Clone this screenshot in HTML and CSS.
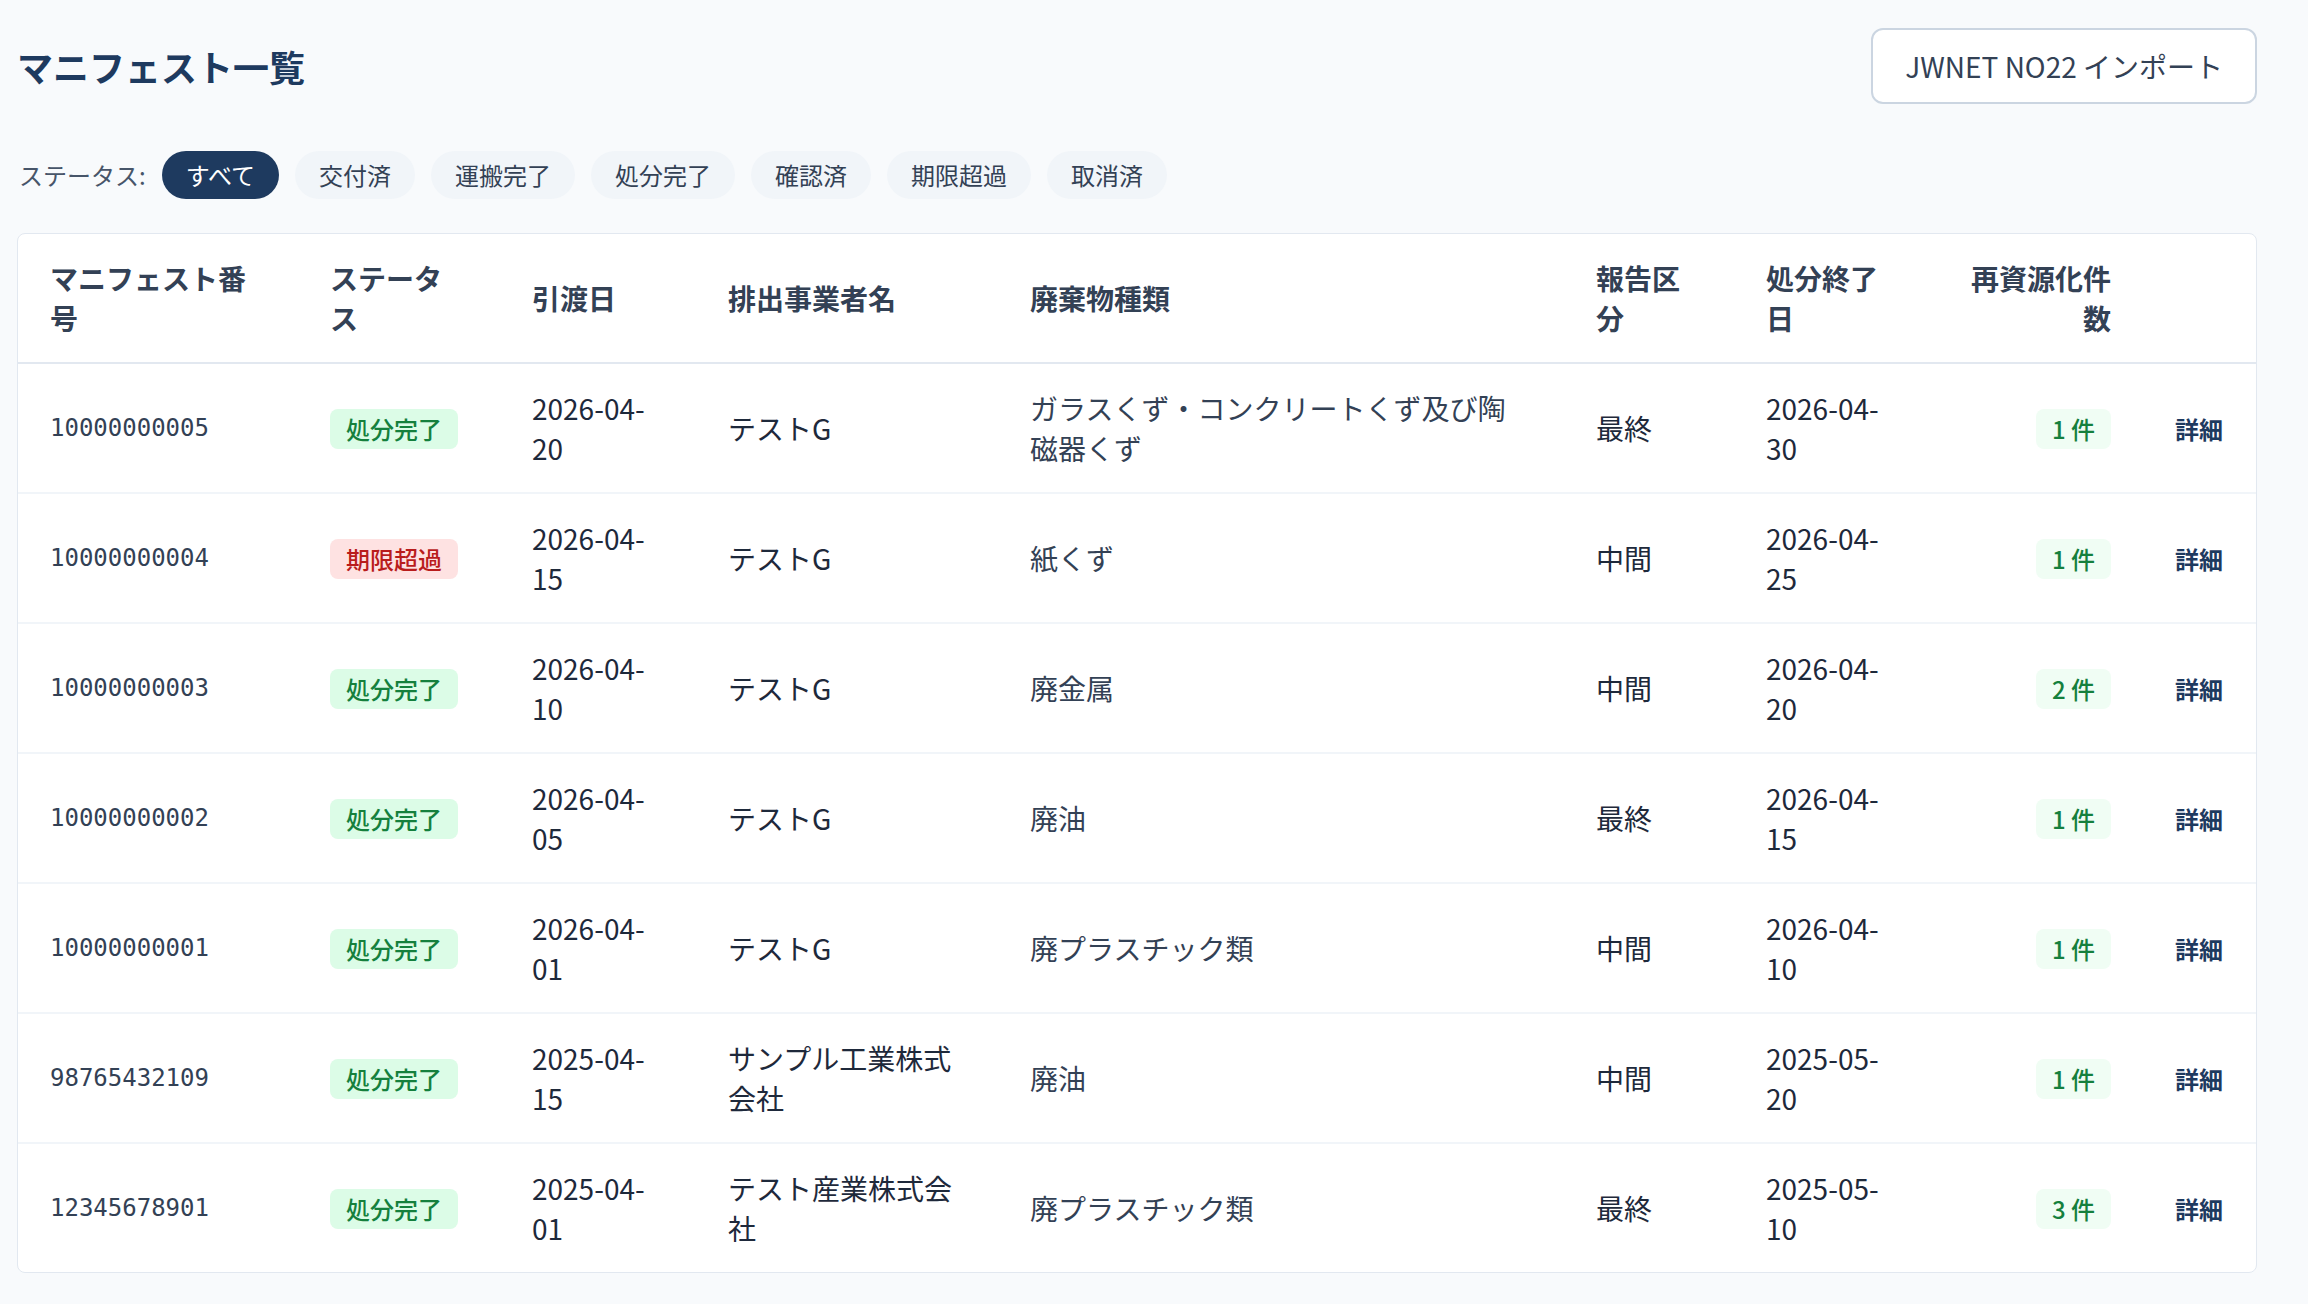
FILE: index.html
```html
<!DOCTYPE html>
<html lang="ja">
<head>
    <meta charset="UTF-8">
    <title>マニフェスト一覧</title>
    <link rel="stylesheet" href="styles.css">
</head>
<body>
    <main class="page">
        <header class="page-header">
            <h1 class="page-title">マニフェスト一覧</h1>
            <button class="import-button">JWNET NO22 インポート</button>
        </header>

        <div class="status-filter">
            <span class="filter-label">ステータス:</span>
            <button class="pill active">すべて</button>
            <button class="pill">交付済</button>
            <button class="pill">運搬完了</button>
            <button class="pill">処分完了</button>
            <button class="pill">確認済</button>
            <button class="pill">期限超過</button>
            <button class="pill">取消済</button>
        </div>

        <div class="table-wrap">
            <table class="manifest-table">
                <colgroup>
                    <col class="c-no">
                    <col class="c-status">
                    <col class="c-date">
                    <col class="c-company">
                    <col class="c-waste">
                    <col class="c-report">
                    <col class="c-end">
                    <col class="c-count">
                    <col class="c-link">
                </colgroup>
                <thead>
                    <tr>
                        <th>マニフェスト番号</th>
                        <th>ステータス</th>
                        <th>引渡日</th>
                        <th>排出事業者名</th>
                        <th>廃棄物種類</th>
                        <th>報告区分</th>
                        <th>処分終了日</th>
                        <th class="num">再資源化件数</th>
                        <th></th>
                    </tr>
                </thead>
                <tbody>
                    <tr>
                        <td class="mono">10000000005</td>
                        <td><span class="badge done">処分完了</span></td>
                        <td>2026-04-20</td>
                        <td>テストG</td>
                        <td class="waste">ガラスくず・コンクリートくず及び陶磁器くず</td>
                        <td>最終</td>
                        <td>2026-04-30</td>
                        <td class="num"><span class="badge count">1 件</span></td>
                        <td><a class="detail-link" href="#">詳細</a></td>
                    </tr>
                    <tr>
                        <td class="mono">10000000004</td>
                        <td><span class="badge overdue">期限超過</span></td>
                        <td>2026-04-15</td>
                        <td>テストG</td>
                        <td class="waste">紙くず</td>
                        <td>中間</td>
                        <td>2026-04-25</td>
                        <td class="num"><span class="badge count">1 件</span></td>
                        <td><a class="detail-link" href="#">詳細</a></td>
                    </tr>
                    <tr>
                        <td class="mono">10000000003</td>
                        <td><span class="badge done">処分完了</span></td>
                        <td>2026-04-10</td>
                        <td>テストG</td>
                        <td class="waste">廃金属</td>
                        <td>中間</td>
                        <td>2026-04-20</td>
                        <td class="num"><span class="badge count">2 件</span></td>
                        <td><a class="detail-link" href="#">詳細</a></td>
                    </tr>
                    <tr>
                        <td class="mono">10000000002</td>
                        <td><span class="badge done">処分完了</span></td>
                        <td>2026-04-05</td>
                        <td>テストG</td>
                        <td class="waste">廃油</td>
                        <td>最終</td>
                        <td>2026-04-15</td>
                        <td class="num"><span class="badge count">1 件</span></td>
                        <td><a class="detail-link" href="#">詳細</a></td>
                    </tr>
                    <tr>
                        <td class="mono">10000000001</td>
                        <td><span class="badge done">処分完了</span></td>
                        <td>2026-04-01</td>
                        <td>テストG</td>
                        <td class="waste">廃プラスチック類</td>
                        <td>中間</td>
                        <td>2026-04-10</td>
                        <td class="num"><span class="badge count">1 件</span></td>
                        <td><a class="detail-link" href="#">詳細</a></td>
                    </tr>
                    <tr>
                        <td class="mono">98765432109</td>
                        <td><span class="badge done">処分完了</span></td>
                        <td>2025-04-15</td>
                        <td>サンプル工業株式会社</td>
                        <td class="waste">廃油</td>
                        <td>中間</td>
                        <td>2025-05-20</td>
                        <td class="num"><span class="badge count">1 件</span></td>
                        <td><a class="detail-link" href="#">詳細</a></td>
                    </tr>
                    <tr>
                        <td class="mono">12345678901</td>
                        <td><span class="badge done">処分完了</span></td>
                        <td>2025-04-01</td>
                        <td>テスト産業株式会社</td>
                        <td class="waste">廃プラスチック類</td>
                        <td>最終</td>
                        <td>2025-05-10</td>
                        <td class="num"><span class="badge count">3 件</span></td>
                        <td><a class="detail-link" href="#">詳細</a></td>
                    </tr>
                </tbody>
            </table>
        </div>
    </main>
</body>
</html>
```

FILE: styles.css
```css
body {
    margin: 0;
    background-color: #f8fafc;
    font-family: "Noto Sans CJK JP", "Noto Sans", sans-serif;
    color: #1e293b;
}
.page {
    width: 2240px;
    margin-left: 17px;
    padding-top: 28px;
}
.page-header {
    display: flex;
    justify-content: space-between;
    align-items: center;
    margin-bottom: 47px;
}
.page-title {
    margin: 0;
    font-size: 36px;
    line-height: 48px;
    font-weight: 700;
    color: #1e3a5f;
}
.import-button {
    font-family: inherit;
    font-size: 28px;
    line-height: 40px;
    padding: 16px 32px;
    color: #334155;
    background-color: #ffffff;
    border: 2px solid #cbd5e1;
    border-radius: 12px;
    cursor: pointer;
}

/* status filter */
.status-filter {
    display: flex;
    align-items: center;
    gap: 16px;
    margin-bottom: 34px;
}
.filter-label {
    font-size: 24px;
    line-height: 32px;
    color: #475569;
    margin-left: 2px;
}
.pill {
    font-family: inherit;
    font-size: 24px;
    line-height: 32px;
    padding: 8px 24px;
    border: none;
    border-radius: 999px;
    background-color: #f1f5f9;
    color: #334155;
    cursor: pointer;
}
.pill.active {
    background-color: #1e3a5f;
    color: #ffffff;
}

/* table */
.table-wrap {
    background-color: #ffffff;
    border: 1px solid #e2e8f0;
    border-radius: 8px;
    overflow: hidden;
}
.manifest-table {
    width: 100%;
    border-collapse: collapse;
    table-layout: fixed;
}
.c-no { width: 280px; }
.c-status { width: 202px; }
.c-date { width: 196px; }
.c-company { width: 302px; }
.c-waste { width: 566px; }
.c-report { width: 170px; }
.c-end { width: 189px; }
.c-count { width: 220px; }
.c-link { width: 113px; }

.manifest-table th,
.manifest-table td {
    padding: 24px 32px;
    font-size: 28px;
    line-height: 40px;
    text-align: left;
    vertical-align: middle;
}
.manifest-table th {
    font-weight: 600;
    color: #334155;
    border-bottom: 2px solid #e2e8f0;
}
.manifest-table td {
    color: #1e293b;
    border-bottom: 2px solid #f1f5f9;
}
.manifest-table tbody tr:last-child td {
    border-bottom: none;
}
.manifest-table .num {
    text-align: right;
}
.manifest-table td.mono {
    font-family: "DejaVu Sans Mono", "Liberation Mono", monospace;
    font-size: 24px;
    color: #334155;
}
.manifest-table td.waste {
    color: #334155;
}

.badge {
    display: inline-block;
    font-size: 24px;
    line-height: 32px;
    padding: 4px 16px;
    border-radius: 8px;
    font-weight: 500;
}
.badge.done {
    background-color: #dcfce7;
    color: #15803d;
}
.badge.overdue {
    background-color: #fee2e2;
    color: #b91c1c;
}
.badge.count {
    background-color: #f0fdf4;
    color: #15803d;
}
.detail-link {
    font-size: 24px;
    font-weight: 600;
    color: #1e3a5f;
    text-decoration: none;
}
```
